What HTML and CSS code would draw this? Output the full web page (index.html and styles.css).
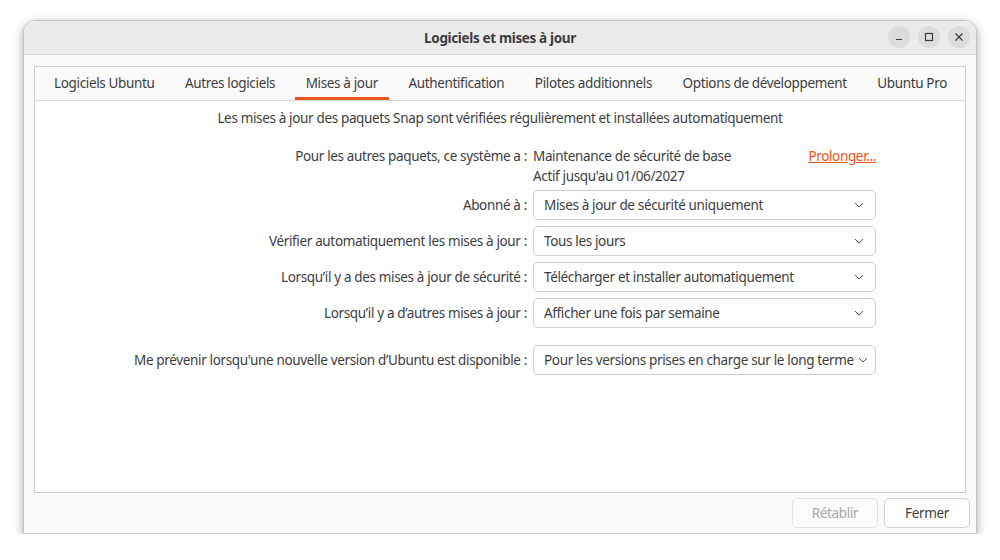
FILE: index.html
```html
<!DOCTYPE html>
<html lang="fr">
<head>
    <meta charset="UTF-8">
    <title>Logiciels et mises à jour</title>
    <link rel="stylesheet" href="styles.css">
</head>
<body>
    <div class="window">
        <div class="titlebar">
            <span class="title">Logiciels et mises à jour</span>
            <div class="wm-buttons">
                <span class="wm-btn">
                    <svg width="10" height="10" viewBox="0 0 10 10"><path d="M2 7.5h6" stroke="#3d3d3d" stroke-width="1.2"/></svg>
                </span>
                <span class="wm-btn">
                    <svg width="10" height="10" viewBox="0 0 10 10"><rect x="1.5" y="1.5" width="7" height="7" fill="none" stroke="#3d3d3d" stroke-width="1.2"/></svg>
                </span>
                <span class="wm-btn">
                    <svg width="10" height="10" viewBox="0 0 10 10"><path d="M1.5 1.5l7 7M8.5 1.5l-7 7" stroke="#3d3d3d" stroke-width="1.2"/></svg>
                </span>
            </div>
        </div>

        <div class="content">
            <div class="notebook">
                <div class="tabs">
                    <span class="tab">Logiciels Ubuntu</span>
                    <span class="tab">Autres logiciels</span>
                    <span class="tab active">Mises à jour</span>
                    <span class="tab">Authentification</span>
                    <span class="tab">Pilotes additionnels</span>
                    <span class="tab">Options de développement</span>
                    <span class="tab">Ubuntu Pro</span>
                </div>
                <div class="page">
                    <p class="intro">Les mises à jour des paquets Snap sont vérifiées régulièrement et installées automatiquement</p>

                    <div class="form">
                        <div class="label">Pour les autres paquets, ce système a :</div>
                        <div class="status">
                            <div class="status-line">
                                <span>Maintenance de sécurité de base</span>
                                <a class="link" href="#">Prolonger...</a>
                            </div>
                            <div>Actif jusqu'au 01/06/2027</div>
                        </div>

                        <div class="label">Abonné à :</div>
                        <div class="combo"><span>Mises à jour de sécurité uniquement</span><svg class="chevron" width="10" height="6" viewBox="0 0 10 6"><path d="M1 1l4 4 4-4" fill="none" stroke="#555" stroke-width="1"/></svg></div>

                        <div class="label">Vérifier automatiquement les mises à jour :</div>
                        <div class="combo"><span>Tous les jours</span><svg class="chevron" width="10" height="6" viewBox="0 0 10 6"><path d="M1 1l4 4 4-4" fill="none" stroke="#555" stroke-width="1"/></svg></div>

                        <div class="label">Lorsqu’il y a des mises à jour de sécurité :</div>
                        <div class="combo"><span>Télécharger et installer automatiquement</span><svg class="chevron" width="10" height="6" viewBox="0 0 10 6"><path d="M1 1l4 4 4-4" fill="none" stroke="#555" stroke-width="1"/></svg></div>

                        <div class="label">Lorsqu’il y a d’autres mises à jour :</div>
                        <div class="combo"><span>Afficher une fois par semaine</span><svg class="chevron" width="10" height="6" viewBox="0 0 10 6"><path d="M1 1l4 4 4-4" fill="none" stroke="#555" stroke-width="1"/></svg></div>

                        <div class="label spaced">Me prévenir lorsqu'une nouvelle version d’Ubuntu est disponible :</div>
                        <div class="combo spaced"><span>Pour les versions prises en charge sur le long terme</span><svg class="chevron" width="10" height="6" viewBox="0 0 10 6"><path d="M1 1l4 4 4-4" fill="none" stroke="#555" stroke-width="1"/></svg></div>
                    </div>
                </div>
            </div>

            <div class="actions">
                <button class="btn" disabled>Rétablir</button>
                <button class="btn">Fermer</button>
            </div>
        </div>
    </div>
</body>
</html>
```

FILE: styles.css
```css
html, body {
    margin: 0;
    padding: 0;
    background: #ffffff;
}
body {
    font-family: "Noto Sans", "DejaVu Sans", sans-serif;
    font-size: 13.5px;
    letter-spacing: -0.35px;
    color: #3d3d3d;
    padding: 20px 0 0 23px;
}

.window {
    width: 954px;
    height: 514px;
    box-sizing: border-box;
    border: 1px solid #c4c4c4;
    border-radius: 12px 12px 0 0;
    background: #fafafa;
    box-shadow: 0 3px 10px rgba(0, 0, 0, 0.35);
    display: flex;
    flex-direction: column;
    overflow: hidden;
}

.titlebar {
    height: 33px;
    flex: none;
    background: #ebebeb;
    border-bottom: 1px solid #d8d8d8;
    display: flex;
    align-items: center;
    justify-content: center;
    position: relative;
}
.title {
    font-weight: bold;
    font-size: 13.5px;
}
.wm-buttons {
    position: absolute;
    right: 6px;
    top: 5px;
    display: flex;
    gap: 8px;
}
.wm-btn {
    width: 22px;
    height: 22px;
    border-radius: 50%;
    background: #dcdcdc;
    display: flex;
    align-items: center;
    justify-content: center;
}

.content {
    flex: 1;
    display: flex;
    flex-direction: column;
    padding: 11px 10px 5px 10px;
}

.notebook {
    height: 427px;
    box-sizing: border-box;
    border: 1px solid #cdcdcd;
    display: flex;
    flex-direction: column;
}
.tabs {
    height: 33px;
    flex: none;
    display: flex;
    align-items: stretch;
    gap: 8.5px;
    padding-left: 8px;
    background: #fafafa;
    border-bottom: 1px solid #d6d6d6;
    white-space: nowrap;
}
.tab {
    padding: 0 11px;
    display: flex;
    align-items: center;
    box-sizing: border-box;
    border-bottom: 3px solid transparent;
    padding-top: 1px;
}
.tab.active {
    border-bottom-color: #e95420;
}

.page {
    flex: 1;
    background: #ffffff;
}
.intro {
    margin: 8px 0 0 0;
    text-align: center;
    line-height: 18px;
}

.form {
    display: grid;
    grid-template-columns: 492px 343px;
    column-gap: 6px;
    row-gap: 6px;
    margin-top: 19px;
    align-items: center;
}
.label {
    text-align: right;
}
.form > .label:first-child {
    align-self: start;
    line-height: 20px;
}
.status {
    line-height: 20px;
    margin-bottom: -2px;
}
.status-line {
    display: flex;
    justify-content: space-between;
}
.link {
    color: #e95420;
    text-decoration: underline;
}
.combo {
    height: 30px;
    box-sizing: border-box;
    border: 1px solid #d0d0d0;
    border-radius: 5px;
    background: #ffffff;
    display: flex;
    align-items: center;
    justify-content: space-between;
    padding: 0 11px 0 10px;
    white-space: nowrap;
}
.chevron {
    flex: none;
    margin-left: 4px;
}
.spaced {
    margin-top: 11px;
}

.actions {
    display: flex;
    justify-content: flex-end;
    gap: 6px;
    margin-top: 5px;
    margin-right: -4px;
}
.btn {
    width: 86px;
    height: 30px;
    font-family: inherit;
    font-size: 13.5px;
    letter-spacing: -0.35px;
    color: #3d3d3d;
    background: #ffffff;
    border: 1px solid #cfcfcf;
    border-radius: 5px;
}
.btn:disabled {
    color: #a8a8a8;
    border-color: #e2e2e2;
    background: #fcfcfc;
}
```
